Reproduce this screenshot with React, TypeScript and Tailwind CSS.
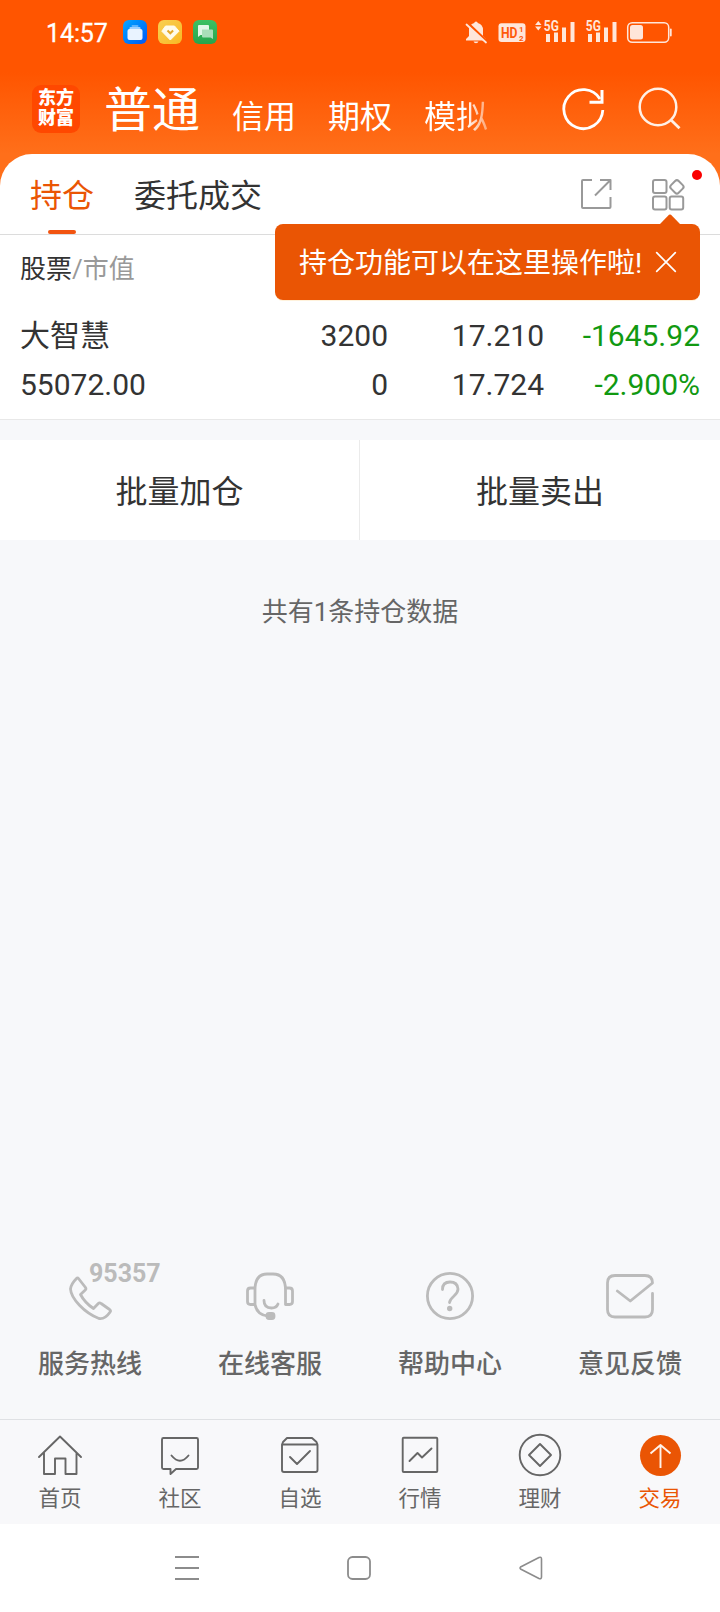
import type { ReactNode } from 'react';
import clsx from 'clsx';

const accounts = ['信用', '期权'];

const rows = [
    { left: '大智慧', amount: '3200', price: '17.210', profit: '-1645.92' },
    { left: '55072.00', amount: '0', price: '17.724', profit: '-2.900%' },
];

function Icon({ box, className, children }: { box: string; className: string; children: ReactNode }) {
    return (
        <svg
            viewBox={box}
            className={clsx('shrink-0 overflow-visible', className)}
            fill="none"
            stroke="currentColor"
            strokeLinecap="round"
            strokeLinejoin="round"
        >
            {children}
        </svg>
    );
}

function StatusBar() {
    return (
        <div className="flex h-16 items-center pl-[46px] pr-[47px] text-[#ffe6da]">
            <span className="w-[77px] pt-[3px] text-[25px] leading-6 tracking-[-0.1px] text-white [-webkit-text-stroke:0.3px_white]">14:57</span>
            <div className="flex gap-[11px]">
                <div className="flex size-6 items-center justify-center rounded-md bg-linear-to-br from-[#12a5ff] to-[#0a55f5]">
                    <svg viewBox="0 0 24 24" className="size-6">
                        <rect x="8.5" y="5" width="7" height="2" rx="1" fill="#5db5ff" />
                        <rect x="6.5" y="7" width="11" height="3" rx="1" fill="#9ed0ff" />
                        <rect x="4.5" y="9" width="15" height="11" rx="2" fill="#e9f3ff" />
                    </svg>
                </div>
                <div className="flex size-6 items-center justify-center rounded-md bg-linear-to-br from-[#f8cf50] to-[#f9b920]">
                    <svg viewBox="0 0 24 24" className="size-6">
                        <path d="M7.5 6h9L21 11.2 12.3 20 3.8 11.2z" fill="#fffbea" stroke="#fffbea" strokeLinejoin="round" />
                        <path d="M9.5 10.5l2.8 2.8 2.8-2.8" fill="none" stroke="#e3a82b" strokeWidth="2" />
                    </svg>
                </div>
                <div className="flex size-6 items-center justify-center rounded-md bg-linear-to-b from-[#3cc163] to-[#27a54c]">
                    <svg viewBox="0 0 24 24" className="size-6">
                        <path d="M5 6q0-1 1-1h9q1 0 1 1v9H7.5l-2.5 2z" fill="#e2f7e8" />
                        <path d="M9 9.5h10q1 0 1 1V19l-2.5-1.5H10q-1 0-1-1z" fill="#a9dfb9" />
                    </svg>
                </div>
            </div>
            <div className="ml-auto flex">
                <Icon box="465 20 22 24" className="h-6 w-[22px]">
                    <path
                        d="M476 21.5q1.5 0 1.8 1.5 5.2 1.5 5.2 7v6l3 3v1.5h-20v-1.5l3-3v-6q0-5.500 5.200-7 .3-1.500 1.800-1.500zM473.500 41.500h5q-.5 1.800-2.500 1.800t-2.500-1.800z"
                        fill="currentColor"
                        stroke="none"
                    />
                    <path d="M467 22.5l20 19" stroke="#ff5500" strokeWidth="2.5" />
                    <path d="M466.5 24.5l19.5 18" strokeWidth="1.8" />
                </Icon>
                <Icon box="498 20 28 24" className="ml-[11px] h-6 w-7">
                    <rect x="498.5" y="23.3" width="27" height="18.7" rx="3" fill="currentColor" stroke="none" />
                    <g fill="#ff5a0a" stroke="none" fontFamily="Roboto, sans-serif" fontWeight="700">
                        <text x="501" y="38" fontSize="15" textLength="16.5" lengthAdjust="spacingAndGlyphs">HD</text>
                        <text x="519" y="32" fontSize="8">1</text>
                        <text x="519" y="40.5" fontSize="8">2</text>
                    </g>
                </Icon>
                <Icon box="534 20 42 24" className="ml-2 h-6 w-[42px]">
                    <path d="M538.3 21l3.2 4h-6.4zM538.3 30.5l3.2-4h-6.4z" fill="currentColor" stroke="none" />
                    <text x="543.8" y="31" fontSize="14" fontWeight="700" fontFamily="Roboto, sans-serif" fill="currentColor" stroke="none" textLength="15" lengthAdjust="spacingAndGlyphs">5G</text>
                    <path d="M546 34h4v8h-4zM554 32.5h4v9.5h-4zM562 27.5h4v14.5h-4zM570.5 22h4v20h-4z" fill="currentColor" stroke="none" />
                </Icon>
                <Icon box="585 20 33 24" className="ml-[9px] h-6 w-[33px]">
                    <text x="585.8" y="31" fontSize="14" fontWeight="700" fontFamily="Roboto, sans-serif" fill="currentColor" stroke="none" textLength="15" lengthAdjust="spacingAndGlyphs">5G</text>
                    <path d="M588 34h4v8h-4zM596 32.5h4v9.5h-4zM604 27.5h4v14.5h-4zM612.5 22h4v20h-4z" fill="currentColor" stroke="none" />
                </Icon>
                <Icon box="626 20 47 24" className="ml-2 h-6 w-[47px]">
                    <rect x="627.7" y="22.7" width="41" height="19.6" rx="4.5" strokeWidth="1.5" />
                    <rect x="630" y="25" width="13" height="14.5" rx="2.5" fill="currentColor" stroke="none" />
                    <path d="M670.8 29.5v6" strokeWidth="1.8" />
                </Icon>
            </div>
        </div>
    );
}

function AccountBar() {
    return (
        <div className="flex h-[90px] items-start pl-8 text-white">
            <div className="mt-[21px] flex size-12 flex-col items-center rounded-[9px] bg-[#ff4800] pt-[3px] text-[18px] font-black leading-5">
                <span>东方</span>
                <span>财富</span>
            </div>
            <span className="ml-6 mt-[14px] text-[48px] leading-[66px]">普通</span>
            <div className="mt-[33px] flex gap-8 pl-8 text-[32px] leading-10">
                {accounts.map((name) => (
                    <span key={name}>{name}</span>
                ))}
                <span className="bg-linear-to-r from-white from-65% to-white/40 bg-clip-text text-transparent">模拟</span>
            </div>
            <Icon box="560 86 44 46" className="ml-[72px] mt-[22px] h-[46px] w-11">
                <path d="M602.8 110A19.5 19.5 0 1 1 600 99" strokeWidth="2.8" strokeLinecap="butt" />
                <path d="M602 90v12.3h-12.5" strokeWidth="3" strokeLinecap="butt" strokeLinejoin="miter" />
            </Icon>
            <Icon box="638 86 44 46" className="ml-[34px] mt-[22px] h-[46px] w-11 text-[#fff0e6]">
                <circle cx="658" cy="107" r="18.3" strokeWidth="2.5" />
                <path d="M671.5 120.5l8 7.8" strokeWidth="2.8" strokeLinecap="butt" />
            </Icon>
        </div>
    );
}

function Tip() {
    return (
        <div className="absolute right-5 top-[70px] flex h-[76px] w-[425px] items-center rounded-lg bg-[#ea5504] pl-6 text-[28px] text-white shadow-[0_1px_0_#fff2dc]">
            <svg viewBox="0 0 20 10" className="absolute -top-[10px] right-5 h-[10px] w-5">
                <path d="M0 10L9 .8q1-.8 2 0L20 10z" fill="#ea5504" />
            </svg>
            <span className="whitespace-nowrap pt-[3px] leading-10">持仓功能可以在这里操作啦!</span>
            <Icon box="0 0 20 20" className="absolute right-6 top-7 size-5">
                <path d="M.7.7l18.6 18.6M19.3.7L.7 19.3" strokeWidth="1.7" />
            </Icon>
        </div>
    );
}

function Tabs() {
    return (
        <div className="relative flex h-[81px] border-b border-[#dcdcdc] pl-[30px] text-[32px] leading-[84px] text-[#333]">
            <div className="relative text-[#ea5504]">
                持仓
                <div className="absolute left-[18px] top-[76px] h-1 w-7 rounded-sm bg-[#f25410]" />
            </div>
            <span className="ml-10">委托成交</span>
            <Icon box="580 178 32 32" className="ml-auto mt-6 size-8 text-[#999]">
                <path d="M592 180H583q-1 0-1 1v26q0 1 1 1h26.5q1 0 1-1V197M600 180h10.5v10M610 180.5L595 195.5" strokeWidth="2" strokeLinecap="butt" />
            </Icon>
            <Icon box="651 178 36 33" className="ml-[39px] mr-[33px] mt-6 h-[33px] w-9 text-[#999]">
                <g strokeWidth="2">
                    <rect x="653" y="180" width="13.5" height="13" rx="2" />
                    <rect x="653" y="196.5" width="13.5" height="13" rx="2" />
                    <rect x="669.7" y="196.5" width="13.5" height="13" rx="2" />
                    <rect x="671.5" y="181.5" width="10.8" height="10.8" rx="2.5" transform="rotate(45 676.9 186.9)" />
                </g>
            </Icon>
            <div className="absolute right-[18px] top-4 size-[10px] rounded-full bg-[#fa0000]" />
            <Tip />
        </div>
    );
}

function Positions() {
    return (
        <div className="h-[185px] border-b border-[#e8e8e8] px-5">
            <div className="h-[68px] text-[26px] leading-[68px] text-[#999]">
                <span className="text-[#333]">股票</span>/市值
            </div>
            {rows.map((row) => (
                <div key={row.left} className="grid h-[49px] grid-cols-[210px_158px_156px_156px] text-right text-[30px] leading-[66px] text-[#333]">
                    <span className="text-left">{row.left}</span>
                    <span>{row.amount}</span>
                    <span>{row.price}</span>
                    <span className="text-[#119911]">{row.profit}</span>
                </div>
            ))}
        </div>
    );
}

const services = [
    {
        label: '服务热线',
        box: '60 1262 60 64',
        art: (
            <path d="M76.5 1278.5q1-1.3 2 0l7 9q1 1.5-.5 2.8l-4.5 4.2q4.5 8.5 13 14l4.8-5q1.2-1.2 2.8 0l8.5 6q1.5 1.2.5 2.5-5.1 7.5-11.1 6.5C84.5 1313 71 1298.5 70.5 1289q.5-5 6-10.5z" />
        ),
    },
    {
        label: '在线客服',
        box: '240 1262 60 64',
        art: (
            <>
                <path d="M255 1304.5V1290q0-16 12-16h6q12.500 0 12.500 16v14.500M255 1304.500h-4.500q-3 0-3-3V1291q0-3 3-3h4.500M285.500 1288h4q3 0 3 3v10.500q0 3-3 3h-4M255 1304.500q2 10.500 13 11.500" />
                <rect x="267" y="1313.5" width="7" height="5" rx="2" fill="currentColor" />
                <path d="M264 1300.5q0 7.5 7.5 7.5 5 0 6.5-4" />
            </>
        ),
    },
    {
        label: '帮助中心',
        box: '420 1262 60 64',
        art: (
            <>
                <circle cx="450" cy="1296" r="22.6" />
                <path d="M442.5 1289.5q0-7.5 7.5-7.5t8 7q0 3.5-4 7t-4.5 6.5" />
                <circle cx="449.7" cy="1308.5" r="1.3" fill="currentColor" />
            </>
        ),
    },
    {
        label: '意见反馈',
        box: '600 1262 60 64',
        art: (
            <path d="M652.5 1293.5v16q0 7.5-7.5 7.5h-30q-7.5 0-7.5-7.5V1283q0-7.5 7.5-7.5h30q7.5 0 7.5 7.5L630.3 1301l-13-10" />
        ),
    },
];

const navItems = [
    {
        label: '首页',
        box: '37 1432 46 46',
        art: <path d="M39 1457l21-20.5 21 20.5M44 1453v21h11v-15.5h10.5v15.5h11v-21" />,
    },
    {
        label: '社区',
        box: '157 1432 46 46',
        art: (
            <path d="M163.5 1438h33q1.5 0 1.5 1.5v28q0 1.5-1.5 1.5H176l-5.5 5v-5h-7q-1.5 0-1.5-1.5v-28q0-1.5 1.5-1.5zM171.5 1455.5q8.5 10.5 17 0" />
        ),
    },
    {
        label: '自选',
        box: '277 1432 46 46',
        art: (
            <path d="M282 1444.5v25.5q0 2 2 2h31.5q2 0 2-2v-25.5zM282 1444.5l1-2.5 4-4h25l4.5 4 1 2.5M290 1457l7 7 13-13" />
        ),
    },
    {
        label: '行情',
        box: '397 1432 46 46',
        art: (
            <>
                <rect x="402.7" y="1437.7" width="34.6" height="34.3" rx="1" />
                <path d="M409.5 1461l8-8 4.5 4.5 9.5-9" />
            </>
        ),
    },
    {
        label: '理财',
        box: '517 1432 46 46',
        art: (
            <>
                <circle cx="540" cy="1455" r="20.3" />
                <path d="M540 1444l11 11-11 11-11-11z" />
            </>
        ),
    },
    {
        label: '交易',
        box: '637 1432 46 46',
        active: true,
        art: (
            <>
                <circle cx="660.5" cy="1455.5" r="20.5" fill="#ea5504" stroke="none" />
                <path d="M660.5 1468v-22.5M650.5 1453.5l10-8.5 10 8.5" stroke="#fff3ea" strokeLinecap="butt" />
            </>
        ),
    },
];

export default function App() {
    return (
        <div className="flex h-[1612px] w-[720px] flex-col overflow-hidden bg-[#f7f8fa] font-[Roboto,'Noto_Sans_CJK_SC',sans-serif]">
            <div className="bg-[linear-gradient(#ff5500_72px,#ff6f1a_154px)]">
                <StatusBar />
                <AccountBar />
                <div className="rounded-t-[32px] bg-white">
                    <Tabs />
                    <Positions />
                </div>
            </div>

            {/* Batch actions */}
            <div className="mt-5 grid h-[100px] grid-cols-2 bg-white text-center text-[32px] text-[#333]">
                <div className="h-[100px] border-r border-[#ebebeb] pt-1 leading-[96px]">批量加仓</div>
                <div className="h-[100px] pt-1 leading-[96px]">批量卖出</div>
            </div>
            <p className="mt-[52px] text-center text-[26px] leading-10 text-[#666]">共有1条持仓数据</p>

            {/* Service links */}
            <div className="mt-auto grid h-[157px] grid-cols-4">
                {services.map((item, i) => (
                    <div key={item.label} className="relative flex flex-col items-center text-[#bbb]">
                        <Icon box={item.box} className="h-16 w-[60px]">
                            <g strokeWidth="2.8">{item.art}</g>
                        </Icon>
                        {i === 0 && (
                            <span className="absolute left-[89px] top-0 text-[25px] font-bold leading-6">95357</span>
                        )}
                        <span className="mt-[18px] text-[26px] font-medium leading-10 text-[#666]">{item.label}</span>
                    </div>
                ))}
            </div>

            {/* Bottom tabs */}
            <div className="grid h-[105px] grid-cols-6 border-t border-[#dfe1e4] bg-[#f8f8fa]">
                {navItems.map((item) => (
                    <div
                        key={item.label}
                        className={clsx('flex flex-col items-center pt-3', item.active ? 'text-[#ea5504]' : 'text-[#666]')}
                    >
                        <Icon box={item.box} className="size-[46px]">
                            <g strokeWidth="1.9">{item.art}</g>
                        </Icon>
                        <span className="mt-[7px] text-[21.5px] leading-7">{item.label}</span>
                    </div>
                ))}
            </div>

            {/* System navigation */}
            <div className="flex h-[88px] items-center bg-white pl-[174px] text-[#8c8c8c]">
                <Icon box="174 1555 26 26" className="size-[26px]">
                    <path d="M175 1557h24M175 1568h24M175 1579h24" strokeWidth="1.9" strokeLinecap="butt" />
                </Icon>
                <Icon box="346 1555 26 26" className="ml-[146px] size-[26px]">
                    <rect x="348" y="1557" width="22" height="22" rx="4.5" strokeWidth="1.8" />
                </Icon>
                <Icon box="518 1555 26 26" className="ml-[146px] size-[26px]">
                    <path d="M520.5 1567q-1 1 0 2l18.5 9.5q2.5.8 2.5-1.5v-18q0-2.5-2.5-1.5z" strokeWidth="1.6" />
                </Icon>
            </div>
        </div>
    );
}
